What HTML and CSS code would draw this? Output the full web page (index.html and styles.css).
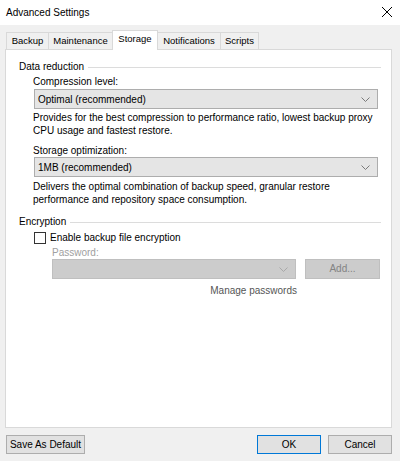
FILE: index.html
```html
<!DOCTYPE html>
<html>
<head>
    <title>Advanced Settings</title>
    <link rel="stylesheet" href="styles.css">
</head>
<body>
    <div class="window">
        <div class="titlebar">
            <span>Advanced Settings</span>
            <svg class="close" width="12" height="12" viewBox="0 0 12 12">
                <path d="M1 1 L11 11 M11 1 L1 11" stroke="#000" stroke-width="1" fill="none"/>
            </svg>
        </div>

        <div class="tabs">
            <div class="tab w-backup">Backup</div>
            <div class="tab w-maint">Maintenance</div>
            <div class="tab active w-storage">Storage</div>
            <div class="tab w-notif">Notifications</div>
            <div class="tab w-scripts">Scripts</div>
        </div>

        <div class="panel">
            <div class="group-title"><span>Data reduction</span><div class="rule"></div></div>
            <div class="group">
                <div class="label">Compression level:</div>
                <div class="combo">
                    <span>Optimal (recommended)</span>
                    <svg width="9" height="5" viewBox="0 0 9 5"><path d="M0.5 0.5 L4.5 4.5 L8.5 0.5" stroke="#7a7a7a" fill="none"/></svg>
                </div>
                <p class="desc">Provides for the best compression to performance ratio, lowest backup proxy CPU usage and fastest restore.</p>

                <div class="label second">Storage optimization:</div>
                <div class="combo">
                    <span>1MB (recommended)</span>
                    <svg width="9" height="5" viewBox="0 0 9 5"><path d="M0.5 0.5 L4.5 4.5 L8.5 0.5" stroke="#7a7a7a" fill="none"/></svg>
                </div>
                <p class="desc">Delivers the optimal combination of backup speed, granular restore<br>performance and repository space consumption.</p>
            </div>

            <div class="group-title encryption"><span>Encryption</span><div class="rule"></div></div>
            <div class="group">
                <label class="check-row"><span class="checkbox"></span>Enable backup file encryption</label>
                <div class="password">
                    <div class="label disabled">Password:</div>
                    <div class="password-row">
                        <div class="combo off">
                            <span></span>
                            <svg width="9" height="5" viewBox="0 0 9 5"><path d="M0.5 0.5 L4.5 4.5 L8.5 0.5" stroke="#a8a8a8" fill="none"/></svg>
                        </div>
                        <div class="btn off add">Add...</div>
                    </div>
                    <div class="manage">Manage passwords</div>
                </div>
            </div>
        </div>

        <div class="footer">
            <div class="btn save">Save As Default</div>
            <div class="spacer"></div>
            <div class="btn ok">OK</div>
            <div class="btn cancel">Cancel</div>
        </div>
    </div>
</body>
</html>
```

FILE: styles.css
```css
body { margin: 0; font-family: "Liberation Sans", Arial, sans-serif; font-size: 10px; color: #000; }
.window { width: 400px; height: 461px; background: #f0f0f0; display: flex; flex-direction: column; }

.titlebar {
    height: 25px;
    background: #fff;
    display: flex;
    align-items: center;
    justify-content: space-between;
    padding: 0 7px 0 6px;
}
.close { margin-top: -1px; }

.tabs { display: flex; align-items: flex-end; height: 24px; padding-left: 6px; font-size: 9.5px; }
.tab {
    height: 17px;
    line-height: 15px;
    text-align: center;
    border: 1px solid #d9d9d9;
    border-bottom: none;
    margin-left: -1px;
    background: #f0f0f0;
    box-sizing: border-box;
}
.tab.active {
    height: 20px;
    margin-bottom: -1px;
    background: #fff;
    position: relative;
    z-index: 1;
    line-height: 16px;
}
.w-backup { width: 43px; margin-left: 0; }
.w-maint { width: 65px; }
.w-storage { width: 46px; }
.w-notif { width: 64px; }
.w-scripts { width: 39px; }

.panel {
    height: 379px;
    margin: 0 8px 0 5px;
    border: 1px solid #d9d9d9;
    background: #fff;
    box-sizing: border-box;
    padding: 9px 10px 0 13px;
}

.group-title { display: flex; align-items: center; line-height: 15px; }
.group-title .rule { flex: 1; height: 1px; background: #dcdcdc; margin-left: 4px; margin-top: 1px; }
.group-title.encryption { margin-top: 8px; }
.group { padding: 0 3px 0 14px; }

.label { line-height: 13px; margin-top: 1px; margin-bottom: 1px; }
.label.second { margin-top: 7px; margin-bottom: 0; }
.label.disabled { color: #a0a0a0; margin-top: 2px; margin-bottom: 0; }

.combo {
    height: 20px;
    box-sizing: border-box;
    background: #e5e5e5;
    border: 1px solid #adadad;
    display: flex;
    align-items: center;
    justify-content: space-between;
    padding: 0 7px 0 3px;
    margin-left: 1px;
}
.combo.off { background: #cccccc; border-color: #bfbfbf; flex: 1; margin-left: 0; }

.desc { margin: 2px 0 0; line-height: 13px; }
.label.second + .combo + .desc { margin-top: 3px; }

.check-row { display: flex; align-items: center; line-height: 13px; margin-top: 2px; }
.checkbox {
    width: 12px;
    height: 12px;
    box-sizing: border-box;
    border: 1px solid #333;
    background: #fff;
    margin: 0 4px 0 1px;
}

.password { padding: 0 0 0 19px; }
.password-row { display: flex; gap: 9px; margin-right: -2px; }

.btn {
    height: 19px;
    box-sizing: border-box;
    background: #e1e1e1;
    border: 1px solid #adadad;
    text-align: center;
    line-height: 17px;
}
.password-row .btn { height: 20px; line-height: 18px; }
.btn.off { background: #cccccc; border-color: #bfbfbf; color: #838383; }
.add { width: 75px; }
.manage { color: #555; line-height: 13px; margin-top: 5px; width: 245px; text-align: right; }

.footer { display: flex; padding: 7px 8px 0 6px; }
.spacer { flex: 1; }
.save { width: 79px; }
.ok { width: 64px; border: 1px solid #0078d7; margin-right: 7px; }
.cancel { width: 64px; }
```
